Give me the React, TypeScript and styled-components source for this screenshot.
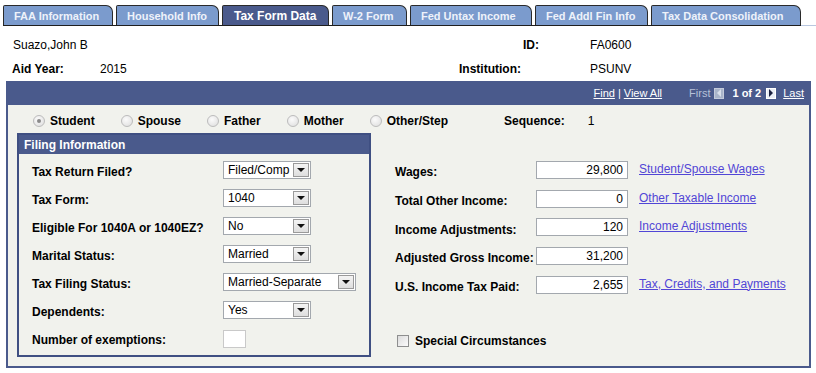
import React from "react";
import styled, { createGlobalStyle } from "styled-components";

const GlobalStyle = createGlobalStyle`
  body {
    margin: 0;
    background: #ffffff;
    font-family: "Liberation Sans", Arial, sans-serif;
    font-size: 12px;
    color: #000000;
  }
`;

const Page = styled.div`
  width: 816px;
  height: 373px;
  overflow: hidden;
`;

const TabStrip = styled.div`
  display: flex;
  padding: 5px 0 0 3px;
`;

const TabRow = styled.div`
  display: flex;
  gap: 3px;
  border-bottom: 1px solid #1e1e1e;
`;

const TabTail = styled.div`
  flex: 1;
  border-bottom: 1px solid #b9c7df;
`;

const Tab = styled.div<{ $w: number; $active?: boolean }>`
  width: ${(p) => p.$w}px;
  height: 20px;
  box-sizing: border-box;
  display: flex;
  align-items: center;
  padding-left: ${(p) => (p.$active ? 11 : 10)}px;
  border: 1px solid #2a2a2a;
  border-bottom: none;
  border-radius: 2px 7px 0 0;
  background: ${(p) => (p.$active ? "#4a5a8c" : "#7b9bcd")};
  color: ${(p) => (p.$active ? "#ffffff" : "#eef2fa")};
  font-size: ${(p) => (p.$active ? 12 : 11)}px;
  font-weight: bold;
  white-space: nowrap;
`;

const Header = styled.div`
  display: grid;
  grid-template-columns: 88px 359px 131px 1fr;
  row-gap: 8px;
  padding: 11px 0 0 12px;
  line-height: 16px;
`;

const Name = styled.div`
  grid-column: 1 / 3;
  padding-left: 1px;
`;

const HeadLabel = styled.div<{ $indent?: number }>`
  font-weight: bold;
  padding-left: ${(p) => p.$indent ?? 0}px;
`;

const HeadValue = styled.div``;

const Panel = styled.div`
  margin: 4px 5px 0 6px;
  border: 2px solid #4a5a8c;
  background: #f1f2ed;
`;

const PagerBar = styled.div`
  height: 22px;
  box-sizing: border-box;
  background: #4a5a8c;
  display: flex;
  justify-content: flex-end;
  align-items: center;
  padding: 0 5px 2px 0;
  color: #ffffff;
  font-size: 11px;
`;

const BarLink = styled.span`
  color: #ffffff;
  text-decoration: underline;
`;

const Sep = styled.span`
  margin: 0 3px;
`;

const Dim = styled.span`
  color: #b6c0d8;
  margin-left: 27px;
`;

const Count = styled.span`
  font-weight: bold;
  margin: 0 5px;
`;

const ArrowBtn = styled.span<{ $dir: "left" | "right"; $off?: boolean }>`
  width: 10px;
  height: 11px;
  margin: 0 ${(p) => (p.$dir === "left" ? 3 : 2)}px 0 ${(p) => (p.$dir === "left" ? 4 : 0)}px;
  box-sizing: border-box;
  display: flex;
  align-items: center;
  justify-content: center;
  background: ${(p) => (p.$off ? "#a9b4ca" : "#e9edf5")};
  border: 1px solid ${(p) => (p.$off ? "#c3cadb" : "#ffffff")};
  &::after {
    content: "";
    width: 0;
    height: 0;
    border-top: 4px solid transparent;
    border-bottom: 4px solid transparent;
    ${(p) =>
      p.$dir === "left"
        ? `border-right: 4px solid ${p.$off ? "#d9dfeb" : "#1a2040"};`
        : `border-left: 4px solid ${p.$off ? "#d9dfeb" : "#1a2040"};`}
  }
`;

const LastLink = styled(BarLink)`
  margin-left: 5px;
`;

const Content = styled.div`
  padding: 8px 0 9px 0;
`;

const RadioRow = styled.div`
  display: flex;
  align-items: center;
  height: 16px;
  padding-left: 25px;
  gap: 26px;
`;

const RadioItem = styled.label`
  display: flex;
  align-items: center;
  gap: 5px;
  font-weight: bold;
`;

const Radio = styled.span<{ $checked?: boolean }>`
  width: 12px;
  height: 12px;
  box-sizing: border-box;
  border-radius: 50%;
  border: 1px solid #bcbcbc;
  background: radial-gradient(circle at 40% 35%, #fbfbfb, #dcdcdc);
  display: flex;
  align-items: center;
  justify-content: center;
  &::after {
    content: "";
    width: 4px;
    height: 4px;
    border-radius: 50%;
    background: ${(p) => (p.$checked ? "#8a8a8a" : "transparent")};
  }
`;

const Sequence = styled.div`
  display: flex;
  margin-left: 30px;
  gap: 23px;
`;

const Bold = styled.span`
  font-weight: bold;
`;

const Body = styled.div`
  display: flex;
  align-items: flex-start;
  padding-left: 9px;
  margin-top: 4px;
`;

const Box = styled.div`
  width: 354px;
  box-sizing: border-box;
  border: 2px solid #3f4f82;
`;

const BoxTitle = styled.div`
  height: 19px;
  background: #4a5a8c;
  color: #ffffff;
  font-weight: bold;
  display: flex;
  align-items: center;
  padding-left: 5px;
`;

const BoxRows = styled.div`
  padding: 3px 0 2px 13px;
`;

const FieldRow = styled.div<{ $h: number }>`
  display: flex;
  align-items: center;
  height: ${(p) => p.$h}px;
`;

const Label = styled.div<{ $w: number }>`
  width: ${(p) => p.$w}px;
  font-weight: bold;
  padding-top: 2px;
`;

const Select = styled.div<{ $w: number }>`
  width: ${(p) => p.$w}px;
  height: 18px;
  box-sizing: border-box;
  border: 1px solid #a3a8ae;
  background: #ffffff;
  display: flex;
  align-items: center;
  justify-content: space-between;
  padding: 0 1px 1px 4px;
  margin-top: -2px;
`;

const DropBtn = styled.span`
  width: 16px;
  height: 14px;
  box-sizing: border-box;
  margin-top: 1px;
  border: 1px solid #9a9a9a;
  background: linear-gradient(#f4f4f4, #dedede);
  display: flex;
  align-items: center;
  justify-content: center;
  &::after {
    content: "";
    border-left: 4px solid transparent;
    border-right: 4px solid transparent;
    border-top: 4px solid #111111;
  }
`;

const SmallInput = styled.div`
  width: 23px;
  height: 18px;
  box-sizing: border-box;
  border: 1px solid #c9c9c9;
  background: #ffffff;
`;

const RightCol = styled.div`
  margin-left: 24px;
  padding-top: 24px;
`;

const Amount = styled.div`
  width: 92px;
  height: 18px;
  box-sizing: border-box;
  border: 1px solid #a3a8ae;
  background: #ffffff;
  text-align: right;
  padding: 1px 4px 0 0;
  line-height: 15px;
  margin: -3px 11px 0 0;
`;

const Link = styled.a`
  color: #5146d6;
  text-decoration: underline;
  margin-top: -5px;
`;

const CheckRow = styled.label`
  display: flex;
  align-items: center;
  gap: 6px;
  margin: 33px 0 0 2px;
  height: 16px;
  font-weight: bold;
`;

const Checkbox = styled.span`
  width: 12px;
  height: 12px;
  box-sizing: border-box;
  border: 1px solid #8e8f8f;
  background: linear-gradient(135deg, #dcdcdc, #fbfbfb);
`;

const tabs = [
  { t: "FAA Information", w: 110 },
  { t: "Household Info", w: 103 },
  { t: "Tax Form Data", w: 107, active: true },
  { t: "W-2 Form", w: 75 },
  { t: "Fed Untax Income", w: 122 },
  { t: "Fed Addl Fin Info", w: 113 },
  { t: "Tax Data Consolidation", w: 150 },
];

const filing = [
  { label: "Tax Return Filed?", value: "Filed/Comp", w: 88 },
  { label: "Tax Form:", value: "1040", w: 88 },
  { label: "Eligible For 1040A or 1040EZ?", value: "No", w: 88 },
  { label: "Marital Status:", value: "Married", w: 88 },
  { label: "Tax Filing Status:", value: "Married-Separate", w: 133 },
  { label: "Dependents:", value: "Yes", w: 88 },
];

const income = [
  { label: "Wages:", value: "29,800", link: "Student/Spouse Wages" },
  { label: "Total Other Income:", value: "0", link: "Other Taxable Income" },
  { label: "Income Adjustments:", value: "120", link: "Income Adjustments" },
  { label: "Adjusted Gross Income:", value: "31,200" },
  { label: "U.S. Income Tax Paid:", value: "2,655", link: "Tax, Credits, and Payments" },
];

const people = ["Student", "Spouse", "Father", "Mother", "Other/Step"];

export default function App() {
  return (
    <Page>
      <GlobalStyle />
      <TabStrip>
        <TabRow>
          {tabs.map((tab) => (
            <Tab key={tab.t} $w={tab.w} $active={tab.active}>
              {tab.t}
            </Tab>
          ))}
        </TabRow>
        <TabTail />
      </TabStrip>

      <Header>
        <Name>Suazo,John B</Name>
        <HeadLabel $indent={64}>ID:</HeadLabel>
        <HeadValue>FA0600</HeadValue>
        <HeadLabel>Aid Year:</HeadLabel>
        <HeadValue>2015</HeadValue>
        <HeadLabel>Institution:</HeadLabel>
        <HeadValue>PSUNV</HeadValue>
      </Header>

      <Panel>
        <PagerBar>
          <BarLink>Find</BarLink>
          <Sep>|</Sep>
          <BarLink>View All</BarLink>
          <Dim>First</Dim>
          <ArrowBtn $dir="left" $off />
          <Count>1 of 2</Count>
          <ArrowBtn $dir="right" />
          <LastLink>Last</LastLink>
        </PagerBar>

        <Content>
          <RadioRow>
            {people.map((p, i) => (
              <RadioItem key={p}>
                <Radio $checked={i === 0} />
                {p}
              </RadioItem>
            ))}
            <Sequence>
              <Bold>Sequence:</Bold>
              <span>1</span>
            </Sequence>
          </RadioRow>

          <Body>
            <Box>
              <BoxTitle>Filing Information</BoxTitle>
              <BoxRows>
                {filing.map((f) => (
                  <FieldRow key={f.label} $h={28}>
                    <Label $w={191}>{f.label}</Label>
                    <Select $w={f.w}>
                      <span>{f.value}</span>
                      <DropBtn />
                    </Select>
                  </FieldRow>
                ))}
                <FieldRow $h={28}>
                  <Label $w={191}>Number of exemptions:</Label>
                  <SmallInput />
                </FieldRow>
              </BoxRows>
            </Box>

            <RightCol>
              {income.map((r) => (
                <FieldRow key={r.label} $h={28.7}>
                  <Label $w={141}>{r.label}</Label>
                  <Amount>{r.value}</Amount>
                  {r.link && <Link>{r.link}</Link>}
                </FieldRow>
              ))}
              <CheckRow>
                <Checkbox />
                Special Circumstances
              </CheckRow>
            </RightCol>
          </Body>
        </Content>
      </Panel>
    </Page>
  );
}
